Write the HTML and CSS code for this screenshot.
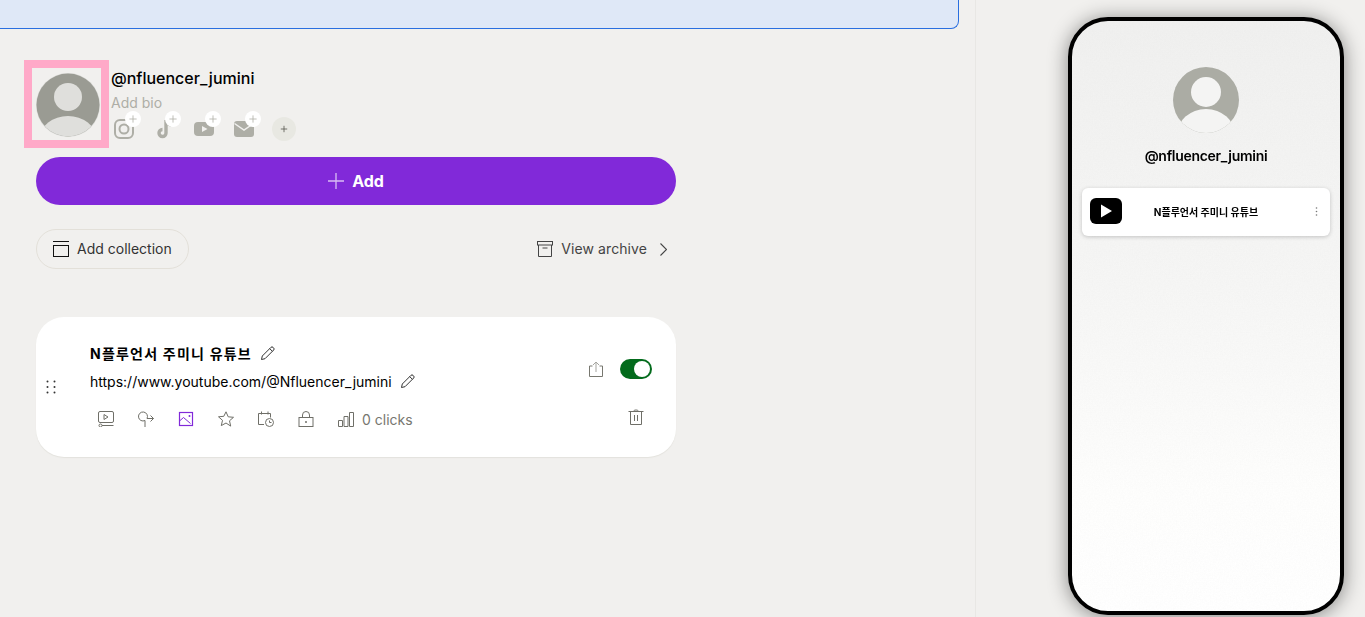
FILE: index.html
```html
<!DOCTYPE html>
<html lang="en">
<head>
<meta charset="utf-8">
<title>Linktree admin</title>
<link rel="stylesheet" href="styles.css">
</head>
<body>
<main class="editor">
  <div class="banner"></div>
  <section class="profile">
    <div class="avatar-frame">
      <svg class="avatar" viewBox="0 0 64 64"><defs><clipPath id="ac"><circle cx="32" cy="32" r="31.500"/></clipPath></defs><circle cx="32" cy="32" r="32" fill="#dcdcd9"/><g clip-path="url(#ac)"><rect width="64" height="64" fill="#9a9b93"/><circle cx="32" cy="24" r="14" fill="#dfdfdc"/><ellipse cx="32" cy="65" rx="28" ry="22" fill="#dfdfdc"/></g></svg>
    </div>
    <div class="profile-info">
      <div class="handle">@nfluencer_jumini</div>
      <div class="bio">Add bio</div>
      <div class="socials">
        <span class="social">
          <svg viewBox="0 0 20 20" class="s-icon"><rect x="1" y="1" width="18" height="18" rx="5" fill="none" stroke="#aeaea6" stroke-width="2"/><circle cx="10" cy="10" r="4.500" fill="none" stroke="#aeaea6" stroke-width="2"/></svg>
          <span class="plus-badge"><svg viewBox="0 0 10 10"><path d="M5 .5v9M.5 5h9" stroke="#aeaea6" fill="none"/></svg></span>
        </span>
        <span class="social">
          <svg viewBox="0 0 20 20" class="s-icon"><path d="M12 1v13a3.500 3.500 0 1 1-3.500-3.500" fill="none" stroke="#aeaea6" stroke-width="3.400"/><path d="M12 2c.5 3 2.500 4.500 5 5" fill="none" stroke="#aeaea6" stroke-width="1.500"/></svg>
          <span class="plus-badge"><svg viewBox="0 0 10 10"><path d="M5 .5v9M.5 5h9" stroke="#aeaea6" fill="none"/></svg></span>
        </span>
        <span class="social">
          <svg viewBox="0 0 20 20" class="s-icon"><rect y="3" width="20" height="14" rx="4" fill="#aeaea6"/><path d="M8 7l5.500 3L8 13z" fill="#f1f0ee"/></svg>
          <span class="plus-badge"><svg viewBox="0 0 10 10"><path d="M5 .5v9M.5 5h9" stroke="#aeaea6" fill="none"/></svg></span>
        </span>
        <span class="social">
          <svg viewBox="0 0 20 20" class="s-icon"><rect y="2" width="20" height="16" rx="3" fill="#aeaea6"/><path d="M.5 4.500L10 11l9.500-6.500" fill="none" stroke="#f1f0ee" stroke-width="1.500"/></svg>
          <span class="plus-badge"><svg viewBox="0 0 10 10"><path d="M5 .5v9M.5 5h9" stroke="#aeaea6" fill="none"/></svg></span>
        </span>
        <span class="social-more"><svg viewBox="0 0 10 10"><path d="M5 1v8M1 5h8" stroke="#55554f" fill="none"/></svg></span>
      </div>
    </div>
  </section>

  <button class="add-btn"><svg viewBox="0 0 16 16"><path d="M8 0v16M0 8h16" stroke="#d9bdf4" stroke-width="1.300" fill="none"/></svg><span>Add</span></button>

  <div class="tools">
    <button class="collection"><svg viewBox="0 0 16 16"><path d="M0 .5h16" stroke="#111" fill="none"/><rect x=".5" y="4.500" width="15" height="11" fill="none" stroke="#111"/></svg><span class="nudge">Add collection</span></button>
    <div class="archive"><svg class="box" viewBox="0 0 16 16"><rect x=".5" y=".5" width="15" height="3.500" fill="none" stroke="#444"/><path d="M1.500 4v11.500h13V4M5.500 7h5" fill="none" stroke="#444"/></svg><span class="nudge archive-label">View archive</span><svg class="chev" viewBox="0 0 7 13"><path d="M.5.500l6 6-6 6" fill="none" stroke="#444" stroke-width="1.100"/></svg></div>
  </div>

  <article class="card">
    <div class="drag"><svg viewBox="0 0 10 14"><g fill="#333"><circle cx="1.500" cy="1.500" r="1"/><circle cx="8.500" cy="1.500" r="1"/><circle cx="1.500" cy="7" r="1"/><circle cx="8.500" cy="7" r="1"/><circle cx="1.500" cy="12.500" r="1"/><circle cx="8.500" cy="12.500" r="1"/></g></svg></div>
    <div class="card-main">
      <div class="line title"><span class="title-text">N플루언서 주미니 유튜브</span><svg class="pencil" viewBox="0 0 16 16"><path d="M1.500 14.500l.8-3.500L11 2.300a1.500 1.500 0 0 1 2 0l.7.7a1.500 1.500 0 0 1 0 2L5 13.700zM9.700 3.600l2.700 2.700" fill="none" stroke="#333"/></svg></div>
      <div class="line url"><span>https://www.youtube.com/@Nfluencer_jumini</span><svg class="pencil" viewBox="0 0 16 16"><path d="M1.500 14.500l.8-3.500L11 2.300a1.500 1.500 0 0 1 2 0l.7.7a1.500 1.500 0 0 1 0 2L5 13.700zM9.700 3.600l2.700 2.700" fill="none" stroke="#333"/></svg></div>
      <div class="actions">
        <svg viewBox="0 0 16 16"><rect x=".5" y=".5" width="15" height="11" rx="1.500" fill="none" stroke="#6f6f68"/><path d="M6 3.500l4 2.500-4 2.500z" fill="none" stroke="#6f6f68"/><path d="M4 14.500h11.500" stroke="#6f6f68" fill="none"/><circle cx="2.500" cy="14.500" r="1.500" fill="none" stroke="#6f6f68"/></svg>
        <svg viewBox="0 0 16 16"><path d="M7 16V9.500A4.500 4.500 0 1 1 9 7.500H15.500M12.500 4.500l3 3-3 3" fill="none" stroke="#6f6f68"/></svg>
        <svg viewBox="0 0 16 16"><rect x="1.500" y="1.500" width="13" height="13" fill="none" stroke="#8129d9" stroke-width="1.200"/><path d="M1.500 10L5.500 6.500l7 6" fill="none" stroke="#8129d9"/><circle cx="11.500" cy="5" r="1" fill="#8129d9"/></svg>
        <svg viewBox="0 0 16 16"><path d="M8 .8l2.200 5 5.300.5-4 3.500 1.200 5.300L8 12l-4.700 2.600 1.200-5.300-4-3.500 5.300-.5z" fill="none" stroke="#6f6f68"/></svg>
        <svg viewBox="0 0 16 16"><path d="M6 13.500H.5v-11h12v4M3.500 .5v3M10 .5v3" fill="none" stroke="#6f6f68"/><circle cx="11.500" cy="11.500" r="4" fill="#fff" stroke="#6f6f68"/><path d="M11.500 9.500v2h2" fill="none" stroke="#6f6f68"/></svg>
        <svg viewBox="0 0 16 16"><rect x="1" y="6.500" width="14" height="9" fill="none" stroke="#6f6f68"/><path d="M4.500 6.500V4a3.500 3.500 0 0 1 7 0v2.500" fill="none" stroke="#6f6f68"/><circle cx="8" cy="11" r="1" fill="#6f6f68"/></svg>
        <span class="clicks"><svg viewBox="0 0 16 16"><path d="M.5 15.500v-6h4v6zM6 15.500v-10h4v10zM11.500 15.500V1.500h4v14z" fill="none" stroke="#6f6f68"/></svg><span class="clicks-label">0 clicks</span></span>
      </div>
    </div>
    <div class="card-side">
      <div class="side-top">
        <svg class="share" viewBox="0 0 14 16"><path d="M3.500 5H.5v10.500h13V5h-3" fill="none" stroke="#77776f"/><path d="M7 11V1M4 4l3-3 3 3" fill="none" stroke="#a5a5a0"/></svg>
        <span class="toggle"><span class="knob"></span></span>
      </div>
      <svg class="trash" viewBox="0 0 16 16"><path d="M.5 2.500h15M2.500 2.500v13h11v-13M5.500 2.500C5.500 .5 10.500 .5 10.500 2.500M6.500 6v6M9.500 6v6" fill="none" stroke="#6f6f68"/></svg>
    </div>
  </article>
</main>

<aside class="preview">
  <div class="phone">
    <svg class="grain" width="100%" height="100%"><filter id="noise"><feTurbulence type="fractalNoise" baseFrequency=".7" numOctaves="2" seed="4"/><feColorMatrix values="0 0 0 0 .5  0 0 0 0 .5  0 0 0 0 .5  0 0 0 .09 -.025"/></filter><rect width="100%" height="100%" filter="url(#noise)"/></svg>
    <svg class="phone-avatar" viewBox="0 0 66 66"><defs><clipPath id="pc"><circle cx="33" cy="33" r="33"/></clipPath></defs><g clip-path="url(#pc)"><rect width="66" height="66" fill="#abaca4"/><circle cx="33" cy="25" r="15" fill="#f4f4f3"/><ellipse cx="33" cy="68" rx="29" ry="26" fill="#f4f4f3"/></g></svg>
    <div class="phone-name">@nfluencer_jumini</div>
    <div class="phone-link">
      <svg class="yt" viewBox="0 0 32 26"><rect width="32" height="26" rx="6" fill="#000"/><path d="M11 6.500l11 6.500-11 6.500z" fill="#fff"/></svg>
      <span class="phone-link-text">N플루언서 주미니 유튜브</span>
      <svg class="dots" viewBox="0 0 3 9"><g fill="#777"><circle cx="1.500" cy="1" r=".8"/><circle cx="1.500" cy="4.500" r=".8"/><circle cx="1.500" cy="8" r=".8"/></g></svg>
    </div>
  </div>
</aside>
</body>
</html>
```
FILE: styles.css
```css
* { box-sizing: border-box; }
html, body { margin: 0; height: 617px; overflow: hidden; }
body {
  display: flex;
  background: #f1f0ee;
  font-family: Inter, "Noto Sans CJK KR", sans-serif;
  color: #000;
}
svg { display: block; flex: none; }
button { font: inherit; color: inherit; cursor: pointer; }

.editor { width: 976px; flex: none; border-right: 1px solid #e8e7e4; height: 617px; }

.banner {
  height: 29px;
  margin: 0 16px 0 -12px;
  background: #dfe8f7;
  border: 1px solid #2a6fe0;
  border-top: 0;
  border-radius: 0 0 8px 8px;
}

.profile { display: flex; margin: 31px 0 0 24px; }
.avatar-frame {
  width: 85px; height: 88px;
  border: 8px solid #ffa9c8;
  padding: 5px 4px;
}
.avatar { width: 64px; height: 64px; }
.profile-info { margin-left: 2px; }
.handle { font-size: 16px; font-weight: 500; line-height: 20px; margin-top: 8px; }
.bio { font-size: 14px; line-height: 18px; color: #aeaea6; margin-top: 6px; }
.socials { display: flex; align-items: center; margin: 5px 0 0 3px; height: 24px; }
.social { position: relative; width: 40px; height: 20px; display: block; }
.s-icon { width: 20px; height: 20px; }
.plus-badge {
  position: absolute; left: 11px; top: -8px;
  width: 16px; height: 16px; border-radius: 50%;
  background: #fff;
  display: flex; align-items: center; justify-content: center;
}
.plus-badge svg { width: 8px; height: 8px; }
.social-more {
  width: 24px; height: 24px; border-radius: 50%;
  background: #e8e8e2;
  display: flex; align-items: center; justify-content: center;
  margin-left: -2px;
}
.social-more svg { width: 8px; height: 8px; }

.add-btn {
  display: flex; align-items: center; justify-content: center; gap: 8px;
  width: 640px; height: 48px;
  margin: 9px 0 0 36px;
  background: #8129d9;
  color: #fff;
  border: 0;
  border-radius: 24px;
  font-size: 16px;
  font-weight: 700;
}
.add-btn svg { width: 16px; height: 16px; }

.tools {
  display: flex; align-items: center; justify-content: space-between;
  width: 640px; height: 40px;
  margin: 24px 0 0 36px;
}
.collection {
  display: flex; align-items: center; gap: 8px;
  height: 40px; width: 153px;
  padding: 0 0 0 16px;
  background: transparent;
  border: 1px solid #e3e0d9;
  border-radius: 20px;
  font-size: 14px;
  color: #333;
}
.collection svg { width: 16px; height: 16px; }
.nudge { padding-bottom: 2px; }
.archive { display: flex; align-items: center; font-size: 14px; color: #444; padding-right: 9px; }
.box { width: 16px; height: 16px; margin-right: 8px; }
.archive-label { letter-spacing: .08px; }
.chev { width: 7px; height: 13px; margin-left: 13px; }

.card {
  display: flex;
  width: 640px; height: 140px;
  margin: 48px 0 0 36px;
  background: #fff;
  border-radius: 28px;
  box-shadow: 0 1px 1px #e3e2dd;
}
.drag { width: 54px; display: flex; align-items: center; padding: 0 0 0 10px; }
.drag svg { width: 10px; height: 14px; }
.card-main { flex: 1; padding-top: 26px; }
.line { display: flex; align-items: center; gap: 8px; }
.line svg.pencil { width: 16px; height: 16px; }
.title { font-size: 14px; font-weight: 700; height: 20px; }
.title-text { letter-spacing: 1.22px; }
.url { font-size: 14px; height: 20px; margin-top: 8px; }
.actions { display: flex; align-items: center; gap: 24px; margin: 18px 0 0 8px; }
.actions > svg { width: 16px; height: 16px; }
.clicks { display: flex; align-items: center; gap: 8px; font-size: 14px; color: #77776f; }
.clicks svg { width: 16px; height: 16px; }
.clicks-label { padding-top: 2px; }
.card-side { width: 88px; padding: 42px 24px 0 0; display: flex; flex-direction: column; align-items: flex-end; }
.side-top { display: flex; align-items: center; gap: 17px; }
.share { width: 14px; height: 16px; }
.toggle {
  width: 32px; height: 20px; border-radius: 10px;
  background: #036b1c;
  display: flex; align-items: center; justify-content: flex-end;
  padding-right: 2px;
}
.knob { width: 16px; height: 16px; border-radius: 50%; background: #fff; }
.trash { width: 16px; height: 16px; margin: 30px 8px 0 0; }

.preview { flex: 1; padding: 17px 0 0 92px; filter: drop-shadow(0 2px 10px rgba(0,0,0,.45)); }
.phone {
  position: relative;
  width: 276px; height: 598px;
  border: 4px solid #000;
  border-radius: 40px;
  overflow: hidden;
  background: linear-gradient(180deg, #f0f0ef 0%, #f6f6f5 45%, #fefefd 80%, #ffffff 100%);
  display: flex; flex-direction: column; align-items: center;
  padding: 46px 10px 0;
}
.grain { position: absolute; inset: 0; }
.phone-avatar { position: relative; width: 66px; height: 66px; }
.phone-name { position: relative; font-size: 14px; font-weight: 600; line-height: 18px; margin-top: 14px; letter-spacing: -.3px; }
.phone-link {
  position: relative;
  width: 248px; height: 48px;
  margin-top: 23px;
  display: grid; grid-template-columns: 32px 1fr 32px; align-items: center;
  padding: 0 8px 2px;
  background: #fff;
  border-radius: 6px;
  box-shadow: 0 1px 4px rgba(0,0,0,.2);
}
.yt { width: 32px; height: 26px; }
.phone-link-text { text-align: center; font-size: 10px; font-weight: 700; }
.dots { width: 3px; height: 9px; justify-self: end; margin-right: 4px; }
```
